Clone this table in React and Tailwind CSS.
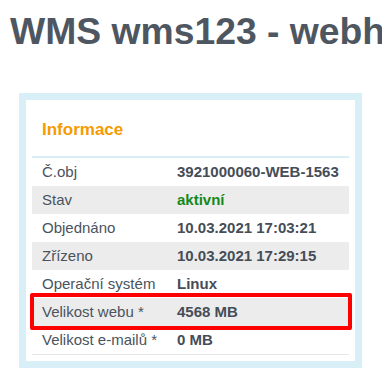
const ROWS = [
  { label: "Č.obj", value: "3921000060-WEB-1563" },
  { label: "Stav", value: "aktivní", green: true, shade: true },
  { label: "Objednáno", value: "10.03.2021 17:03:21" },
  { label: "Zřízeno", value: "10.03.2021 17:29:15", shade: true },
  { label: "Operační systém", value: "Linux" },
  { label: "Velikost webu *", value: "4568 MB", shade: true, marked: true },
  { label: "Velikost e-mailů *", value: "0 MB" },
];

export default function App() {
  return (
    <div className="w-[386px] h-[379px] overflow-hidden bg-white font-['Liberation_Sans',Arial,sans-serif]">
      <div className="w-[382px] overflow-hidden">
        <h1 className="pl-[10px] pt-[10px] text-[37.3px] leading-[42px] font-bold text-[#4e5761] whitespace-nowrap">
          WMS wms123 - webhosting
        </h1>
      </div>

      <div className="ml-[19px] mt-[41px] w-[343px] border-[7px] border-[#d9eff8] bg-white px-[6px] pt-[20px] pb-[6px]">
        <h2 className="pl-[10px] text-[17px] leading-[20px] font-bold text-[#f59b00]">Informace</h2>

        <div className="mt-[16px] border-t-2 border-[#d9eff8] border-b border-b-[#e6e6e6]">
          {ROWS.map((r) => (
            <div
              key={r.label}
              className={`relative flex h-[28px] items-center text-[15px] ${r.shade ? "bg-[#ececec]" : ""}`}
            >
              <div className="w-[145px] pl-[10px] text-[#4a535d]">{r.label}</div>
              <div className={`font-bold ${r.green ? "text-[#15891a]" : "text-[#454d57]"}`}>{r.value}</div>
              {r.marked && (
                <div className="absolute -left-[2px] -right-[3px] -top-[5px] -bottom-[4px] border-4 border-[#ff0000] rounded-[2px]" />
              )}
            </div>
          ))}
        </div>
      </div>
    </div>
  );
}
